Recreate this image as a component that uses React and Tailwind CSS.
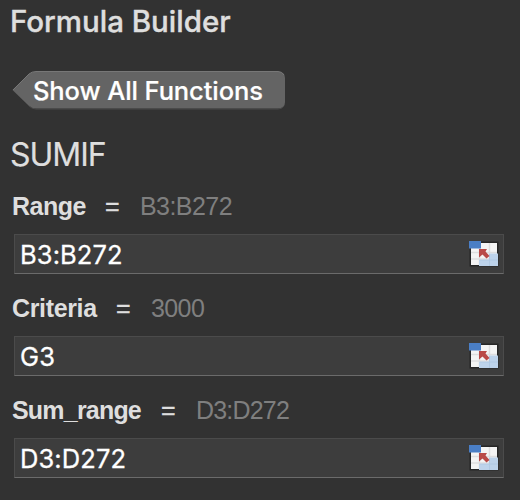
const fields = [
  { name: "Range", value: "B3:B272", nameCls: "w-[75px] tracking-[-0.5px]", resultCls: "tracking-[-0.55px]" },
  { name: "Criteria", result: "3000", value: "G3", nameCls: "w-[86px] tracking-[-0.35px]", resultCls: "tracking-[-0.6px]" },
  { name: "Sum_range", value: "D3:D272", nameCls: "w-[131px] tracking-[-0.8px]", resultCls: "tracking-[-0.8px]" },
];

function RangeIcon() {
  return (
    <svg width="32" height="28" viewBox="0 0 32 28" className="shrink-0">
      <rect x="1.500" y="1.500" width="29" height="25" fill="#262626" />
      <rect x="3" y="3" width="26" height="22" fill="#f4f4f4" />
      <path d="M3 12.5H29M3 19H29M11.5 8V25M21.500 3V25" stroke="#dededf" strokeWidth="1.500" />
      <path d="M21 13.500H30V26H11V20H21Z" fill="#bdd3eb" />
      <path d="M11.500 20H30M21.500 14V26" stroke="#b0c9e3" strokeWidth="1" />
      <rect x="1" y="1" width="12" height="7.500" fill="#4a7ec5" />
      <path d="M11 9H19L17.500 11.500L21.500 16L18.500 18.500L14.500 14.500L11 17.500Z" fill="#b94a48" />
    </svg>
  );
}

function Field({ field }) {
  return (
    <div className="h-[102px] pt-[18px]">
      <label className="flex h-7 items-center pl-3 font-['Liberation_Sans',Arial,sans-serif] text-[25px] leading-7 whitespace-nowrap">
        <span className={"font-bold text-[#dedede] " + field.nameCls}>{field.name}</span>
        <span className="ml-[18px] w-4 text-[#dedede] [-webkit-text-stroke:0.4px_#dedede]">=</span>
        <span className={"ml-[19px] text-[#7f7f7f] " + field.resultCls}>{field.result || field.value}</span>
      </label>
      <div className="mt-[14px] ml-[14px] flex h-10 w-[490px] items-center justify-between border border-[#4b4b4b] border-b-[#6b6b6b] bg-[#3d3d3d] pr-[3px] pl-[5px]">
        <span className="pt-0.5 text-[25.500px] leading-[38px] tracking-[0.1px] text-white [-webkit-text-stroke:0.3px_white]">{field.value}</span>
        <RangeIcon />
      </div>
    </div>
  );
}

export default function App() {
  return (
    <main className="h-[500px] w-[520px] overflow-hidden bg-[#323232] font-['Inter',sans-serif] whitespace-nowrap">
      <h1 className="h-[42px] pl-[10px] text-[29.500px] leading-[43px] font-medium tracking-[-0.02px] text-[#dedede] [-webkit-text-stroke:0.4px_#dedede]">Formula Builder</h1>
      <button className="relative mt-[29px] ml-3 flex h-[38px] w-[273px] items-center pl-[21px] text-left">
        <svg width="275" height="40" viewBox="0 0 275 40" className="absolute top-0 left-0">
          <path d="M0.500 19L17 3Q20 0.500 24 0.500H266Q273 0.500 273 7V31Q273 37.500 266 37.500H24Q20 37.500 17 35Z" fill="#646464" />
          <path d="M1 19L17 3Q20 0.500 24 0.500H266Q270 0.500 272 4" fill="none" stroke="#777" />
          <path d="M17 35Q20 38 24 38H266Q270 38 272 35" fill="none" stroke="#4a4a4a" />
        </svg>
        <span className="relative pt-0.5 text-[25.500px] leading-[38px] font-medium tracking-[-0.1px] text-white [-webkit-text-stroke:0.2px_white]">Show All Functions</span>
      </button>
      <h2 className="mt-[25px] h-10 pl-[10px] text-[32px] leading-[42px] tracking-[-1px] text-[#dedede] [-webkit-text-stroke:0.2px_#dedede]">SUMIF</h2>
      {fields.map((field) => (
        <Field key={field.name} field={field} />
      ))}
    </main>
  );
}
